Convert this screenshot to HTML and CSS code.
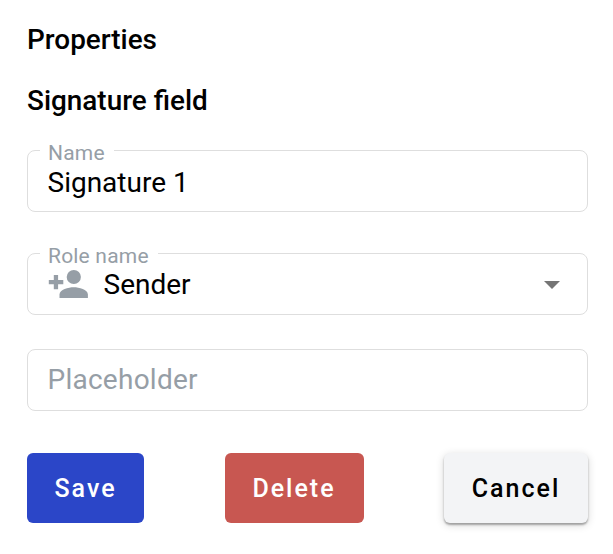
FILE: index.html
```html
<!DOCTYPE html>
<html lang="en">
<head>
<meta charset="utf-8">
<title>Properties</title>
<link rel="stylesheet" href="styles.css">
</head>
<body>
<form class="panel">
  <h1 class="title">Properties</h1>
  <h2 class="title subtitle">Signature field</h2>
  <div class="field">
    <span class="label">Name</span>
    <span class="value">Signature 1</span>
  </div>
  <div class="field role">
    <span class="label">Role name</span>
    <svg class="person" viewBox="0.700 0 40 30"><path d="M6.500 6h4.300v5h5.200v4.300h-5.200v5H6.500v-5h-5V11h5z"/><circle cx="26.500" cy="8" r="7.100"/><path d="M12.200 29v-3.500c0-5 9-7.300 14.200-7.300s14.200 2.300 14.200 7.300V29z"/></svg>
    <span class="value">Sender</span>
    <svg class="arrow" viewBox="0 0 16 8"><path d="M0 0h16L8 8z"/></svg>
  </div>
  <div class="field empty">
    <span class="placeholder">Placeholder</span>
  </div>
  <div class="actions">
    <button type="button" class="button save">Save</button>
    <button type="button" class="button delete">Delete</button>
    <button type="button" class="button cancel">Cancel</button>
  </div>
</form>
</body>
</html>
```
FILE: styles.css
```css
* { box-sizing: border-box; }
body { margin: 0; background: #fff; color: #000; font-family: Roboto, sans-serif; }
.panel { min-height: 554px; padding: 20px 25px 0 27px; }
.title { margin: 0; font-size: 27.9px; line-height: 40px; font-weight: 500; }
.subtitle { margin-top: 21px; }
.field { position: relative; display: flex; align-items: center; height: 62px; margin-top: 29px; padding: 2px 27px 0 19.5px; border: 1px solid #dedede; border-radius: 8px; font-size: 28px; }
.role { margin-top: 41px; padding-top: 0; }
.empty { margin-top: 34px; padding-top: 0; padding-bottom: 2px; }
.label { position: absolute; top: -11px; left: 12px; padding: 0 9px 0 8px; background: #fff; color: #969ea6; font-size: 21px; line-height: 26px; letter-spacing: .2px; }
.person { width: 40px; height: 30px; margin-right: 16px; fill: #969ea6; overflow: visible; }
.arrow { width: 16px; height: 8px; margin: 2px 0 0 auto; fill: #757575; }
.placeholder { color: #969ea6; letter-spacing: .25px; }
.actions { display: flex; justify-content: space-between; margin-top: 42px; }
.button { height: 70px; padding: 0; border: 0; border-radius: 6px; color: #fff; font: 500 25px Roboto, sans-serif; letter-spacing: 2px; }
.save { width: 117px; background: #2b46c8; }
.delete { width: 139px; background: #c85751; }
.cancel { width: 144px; background: #f3f4f6; color: #000; box-shadow: 0 2px 2px rgba(0,0,0,.3), 0 2px 8px rgba(0,0,0,.16); }
```
